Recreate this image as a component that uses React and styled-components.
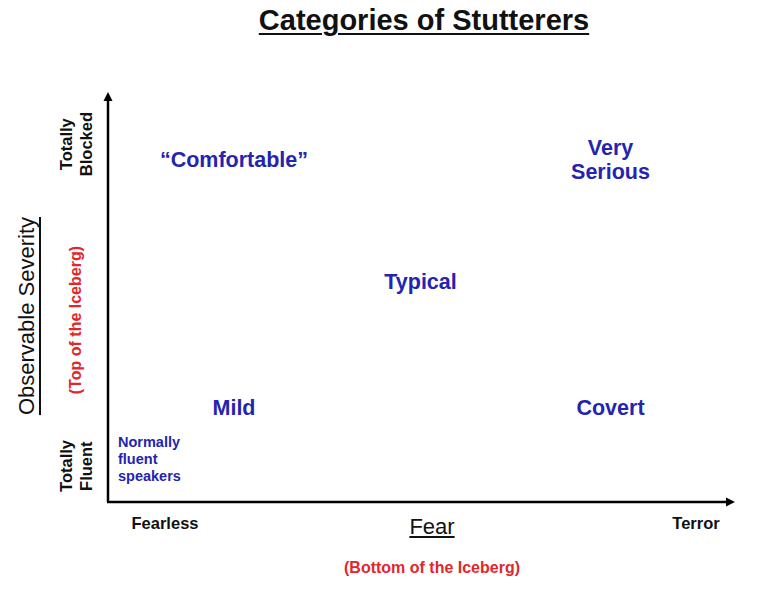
import React from "react";
import styled, { createGlobalStyle } from "styled-components";

const blue = "#2424b0";
const red = "#e3262b";
const ink = "#111";

const GlobalStyle = createGlobalStyle`
  html, body {
    margin: 0;
    padding: 0;
    background: #fff;
  }
  body {
    font-family: "Liberation Sans", Arial, sans-serif;
    color: ${ink};
  }
`;

const Page = styled.div`
  width: 765px;
  height: 608px;
  overflow: hidden;
  background: #fff;
  display: grid;
  grid-template-columns: 44px 64px 1fr;
  grid-template-rows: 92px 410px 1fr;
`;

const Title = styled.h1`
  grid-column: 1 / -1;
  margin: 0;
  padding: 4px 0 0 83px;
  text-align: center;
  font-size: 29px;
  line-height: 32px;
  font-weight: bold;
  text-decoration: underline;
  text-decoration-thickness: 2px;
  text-underline-offset: 3px;
`;

// text that reads from bottom to top
const Upright = styled.div`
  writing-mode: vertical-rl;
  transform: rotate(180deg);
  white-space: nowrap;
  text-align: center;
  font-size: ${({ $size }) => $size}px;
  line-height: ${({ $lh }) => ($lh ? `${$lh}px` : "1.15")};
  font-weight: ${({ $regular }) => ($regular ? "normal" : "bold")};
  color: ${({ $color }) => $color || ink};
  margin-bottom: ${({ $lift }) => $lift || 0}px;
  text-decoration: ${({ $underline }) => ($underline ? "underline" : "none")};
  text-decoration-thickness: 1.5px;
  text-underline-position: left;
  text-underline-offset: 1px;
`;

const SeverityAxis = styled.div`
  grid-column: 1;
  grid-row: 2;
  display: flex;
  align-items: center;
  justify-content: center;
  padding: 38px 0 0 10px;
`;

const Ticks = styled.div`
  grid-column: 2;
  grid-row: 2;
  display: flex;
  flex-direction: column;
  align-items: center;
  justify-content: space-between;
  padding: 20px 0 10px 0;
`;

const Plot = styled.div`
  grid-column: 3;
  grid-row: 2;
  position: relative;
  display: grid;
  grid-template-columns: 252px 121px 1fr;
  grid-template-rows: 136px 108px 1fr;
  padding: 0 25px 22px 0;
`;

const Axes = styled.svg`
  position: absolute;
  left: -8px;
  top: 0;
  overflow: visible;
`;

const Category = styled.div`
  grid-column: ${({ $col }) => $col};
  grid-row: ${({ $row }) => $row};
  align-self: center;
  justify-self: center;
  text-align: center;
  white-space: nowrap;
  font-size: 21.5px;
  line-height: 24px;
  font-weight: bold;
  color: ${blue};
`;

const Note = styled.div`
  position: absolute;
  left: 10px;
  bottom: 17px;
  font-size: 14.5px;
  line-height: 17px;
  font-weight: bold;
  color: ${blue};
`;

const FearAxis = styled.div`
  grid-column: 3;
  grid-row: 3;
  display: grid;
  grid-template-columns: 114px 420px 108px;
  grid-template-rows: 21px auto;
  align-items: center;
  justify-items: center;
  padding-top: 11px;
`;

const Tick = styled.div`
  white-space: nowrap;
  font-size: ${({ $size }) => $size || 16.5}px;
  font-weight: ${({ $regular }) => ($regular ? "normal" : "bold")};
  color: ${({ $color }) => $color || ink};
  grid-column: ${({ $col }) => $col || "auto"};
  margin-top: ${({ $drop }) => $drop || 0}px;
  text-decoration: ${({ $underline }) => ($underline ? "underline" : "none")};
  text-decoration-thickness: 1.5px;
  text-underline-offset: 2px;
`;

const Arrows = () => (
  <Axes width="640" height="410" viewBox="100 92 640 410">
    <g stroke="#000" strokeWidth="2.5" fill="none">
      <line x1="108" y1="502" x2="108" y2="100" />
      <line x1="107" y1="502" x2="727" y2="502" />
    </g>
    <polygon points="108,92 103.5,101 112.5,101" fill="#000" />
    <polygon points="735,502 726,497.5 726,506.5" fill="#000" />
  </Axes>
);

export default function App() {
  return (
    <Page>
      <GlobalStyle />
      <Title>Categories of Stutterers</Title>

      <SeverityAxis>
        <Upright $size={22} $regular $underline>
          Observable Severity
        </Upright>
      </SeverityAxis>

      <Ticks>
        <Upright $size={16.5} $lh={20}>
          Totally
          <br />
          Blocked
        </Upright>
        <Upright $size={16} $color={red} $lift={-24}>
          (Top of the Iceberg)
        </Upright>
        <Upright $size={16.5} $lh={20}>
          Totally
          <br />
          Fluent
        </Upright>
      </Ticks>

      <Plot>
        <Arrows />
        <Category $col={1} $row={1}>“Comfortable”</Category>
        <Category $col={3} $row={1}>
          Very
          <br />
          Serious
        </Category>
        <Category $col={2} $row={2}>Typical</Category>
        <Category $col={1} $row={3}>Mild</Category>
        <Category $col={3} $row={3}>Covert</Category>
        <Note>
          Normally
          <br />
          fluent
          <br />
          speakers
        </Note>
      </Plot>

      <FearAxis>
        <Tick>Fearless</Tick>
        <Tick $size={22} $regular $underline $drop={6}>
          Fear
        </Tick>
        <Tick>Terror</Tick>
        <Tick $col={2} $size={16} $color={red} $drop={-6}>
          (Bottom of the Iceberg)
        </Tick>
      </FearAxis>
    </Page>
  );
}
